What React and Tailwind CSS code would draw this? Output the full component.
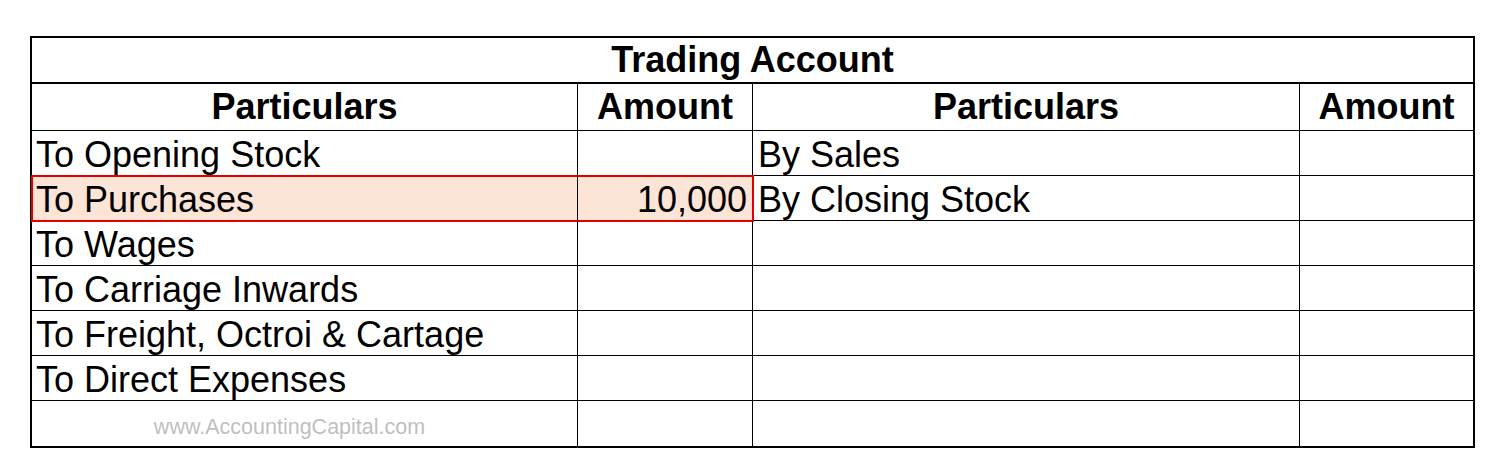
const left = [
  'To Opening Stock',
  'To Purchases',
  'To Wages',
  'To Carriage Inwards',
  'To Freight, Octroi & Cartage',
  'To Direct Expenses',
  '',
]

const right = ['By Sales', 'By Closing Stock', '', '', '', '', '']

function Cell({ children, className = '' }) {
  return (
    <div className={`flex items-center overflow-hidden whitespace-nowrap ${className}`}>
      {children}
    </div>
  )
}

export default function App() {
  return (
    <div className="min-h-screen bg-white pt-[36px] pl-[30px] text-black" style={{ fontFamily: '"Liberation Sans", Arial, sans-serif' }}>
      <div className="w-[1445px] border-2 border-black">
        {/* titulo */}
        <div className="h-[46px] border-b-2 border-black flex items-center justify-center text-[36px] font-bold">
          Trading Account
        </div>

        {/* cabecera */}
        <div className="grid grid-cols-[546px_175px_547px_173px] h-[47px] border-b border-black text-[36px] font-bold">
          <Cell className="justify-center border-r border-black">Particulars</Cell>
          <Cell className="justify-center border-r border-black">Amount</Cell>
          <Cell className="justify-center border-r border-black">Particulars</Cell>
          <Cell className="justify-center">Amount</Cell>
        </div>

        {/* filas */}
        {left.map((txt, i) => {
          const highlight = i === 1
          const last = i === left.length - 1
          return (
            <div
              key={i}
              className={`relative grid grid-cols-[546px_175px_547px_173px] h-[45px] text-[36px] ${last ? '' : 'border-b border-black'}`}
            >
              <Cell className={`pl-[4px] pt-[3px] border-r border-black ${highlight ? 'bg-[#fce4d6]' : ''}`}>
                {last ? (
                  <span className="w-full text-center pr-[34px] pt-[5px] text-[21.5px] text-[#bfbfbf]">www.AccountingCapital.com</span>
                ) : txt}
              </Cell>
              <Cell className={`justify-end pr-[5px] pt-[3px] border-r border-black ${highlight ? 'bg-[#fce4d6]' : ''}`}>
                {highlight ? '10,000' : ''}
              </Cell>
              <Cell className="pl-[5px] pt-[3px] border-r border-black">{right[i]}</Cell>
              <Cell />
              {highlight && (
                <div className="absolute left-[-1px] top-[-1px] w-[723px] h-[47px] border-[2.5px] border-[#e00000] pointer-events-none" />
              )}
            </div>
          )
        })}
      </div>
    </div>
  )
}
